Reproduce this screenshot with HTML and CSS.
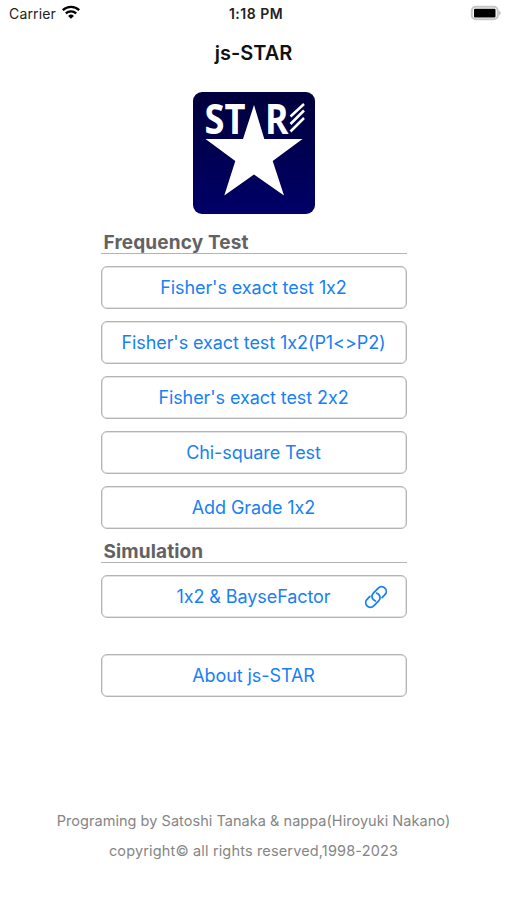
FILE: index.html
```html
<!DOCTYPE html>
<html lang="en">
<head>
<meta charset="utf-8">
<title>js-STAR</title>
<link rel="stylesheet" href="styles.css">
</head>
<body>
<header class="status">
  <div class="status-left"><span class="carrier">Carrier</span>
    <svg class="wifi" viewBox="0 0 18 14" width="18" height="14"><g fill="none" stroke="#000" stroke-width="2.3"><path d="M.8 5.1a11.8 11.8 0 0 1 16.4 0"/><path d="M3.8 8.4a7.5 7.5 0 0 1 10.4 0"/></g><path d="M9 13.8 6.1 10.9a4.2 4.2 0 0 1 5.8 0z"/></svg>
  </div>
  <div class="time">1:18 PM</div>
  <div class="status-right">
    <svg viewBox="0 0 32 16" width="32" height="16"><rect x="1.8" y="1.8" width="26" height="12.5" rx="4" fill="#fff" stroke="#c6c6c6" stroke-width="2"/><rect x="4" y="3.8" width="21.5" height="8.8" rx="1" fill="#000"/><path d="M29.3 5.5q2.6 2.6 0 5z" fill="#aaa"/></svg>
  </div>
</header>
<h1 class="title">js-STAR</h1>
<svg class="logo" viewBox="0 0 122 122" width="122" height="122">
  <defs><linearGradient id="navy" x1="0" y1="0" x2="0" y2="1"><stop offset="0" stop-color="#00003c"/><stop offset="1" stop-color="#000068"/></linearGradient></defs>
  <rect width="122" height="122" rx="9" fill="url(#navy)"/>
  <path fill="#fff" d="M61 13 71.3 47H109.5L79.7 69 91 103.5 61 82.5 31.3 103.5 42.3 69 12.5 47H50z"/>
  <g class="logo-text"><text x="11.5" y="42" textLength="41" lengthAdjust="spacingAndGlyphs">ST</text><text x="72" y="42" textLength="23.5" lengthAdjust="spacingAndGlyphs">R</text></g>
  <path d="M97.5 24.5 111 12M97.5 32 111 18.500M97.5 39.500 111 26" stroke="#fff" stroke-width="2.5" fill="none"/>
</svg>
<main class="menu">
  <h2 class="section">Frequency Test</h2>
  <button class="item">Fisher's exact test 1x2</button>
  <button class="item">Fisher's exact test 1x2(P1&lt;&gt;P2)</button>
  <button class="item">Fisher's exact test 2x2</button>
  <button class="item">Chi-square Test</button>
  <button class="item">Add Grade 1x2</button>
  <h2 class="section second">Simulation</h2>
  <button class="item linked">1x2 &amp; BayseFactor
    <svg class="link" viewBox="-12 -12 24 24" width="24" height="24" fill="none" stroke="#1780f5" stroke-width="1.8" stroke-linecap="round"><g transform="rotate(-45)"><path d="M-3.9-4.7H-7.9A4.7 4.7 0 0 0-7.9 4.7H-.9A4.7 4.7 0 0 0 3.2-2.3"/><path d="M3.9 4.7H7.9A4.7 4.7 0 0 0 7.9-4.7H.9A4.7 4.7 0 0 0-3.2 2.3"/></g></svg>
  </button>
  <button class="item about">About js-STAR</button>
</main>
<footer class="footer">
  <p>Programing by Satoshi Tanaka &amp; nappa(Hiroyuki Nakano)</p>
  <p class="copyright">copyright© all rights reserved,1998-2023</p>
</footer>
</body>
</html>
```
FILE: styles.css
```css
* { box-sizing: border-box; }
body {
  margin: 0;
  height: 900px;
  overflow: hidden;
  background: #fff;
  font-family: Inter, "Liberation Sans", sans-serif;
  font-feature-settings: "calt" 0;
  display: flex;
  flex-direction: column;
  align-items: center;
}
.status {
  width: 100%;
  height: 28px;
  display: grid;
  grid-template-columns: 1fr auto 1fr;
  align-items: center;
  padding: 0 5px 2px 9px;
  font-size: 14px;
  color: #222;
}
.status-left { display: flex; align-items: center; gap: 6px; letter-spacing: 0.15px; }
.wifi { margin-top: -2px; }
.time { font-weight: 600; letter-spacing: 0.5px; margin-right: -1px; }
.status-right { display: flex; justify-content: flex-end; }
.title {
  margin: 12px 0 0;
  height: 24px;
  line-height: 26px;
  font-size: 20px;
  font-weight: 600;
  color: #111;
}
.logo { margin-top: 27.5px; flex: none; }
.logo-text { font: 700 41px "Open Sans", sans-serif; fill: #fff; }
.menu { width: 306px; display: flex; flex-direction: column; }
.section {
  margin: 15.5px 0 12px;
  height: 24.5px;
  padding-left: 3px;
  border-bottom: 1px solid #b4b4b4;
  line-height: 27px;
  font-size: 19px;
  font-weight: 700;
  letter-spacing: 0.13px;
  color: #626262;
}
.section.second { margin-top: -2.5px; }
.item {
  position: relative;
  height: 43px;
  margin: 0 0 12px;
  padding: 1px 0 0;
  border: 1px solid #b4b4b4;
  border-radius: 6px;
  box-shadow: inset 0 0 0 0.5px #c8c8c8;
  background: #fff;
  font: 400 18px/40px Inter, "Liberation Sans", sans-serif;
  font-feature-settings: "calt" 0;
  letter-spacing: -0.08px;
  color: #1780f5;
}
.link { position: absolute; right: 18px; top: 9px; }
.about { margin-top: 24px; }
.footer {
  margin-top: 99px;
  text-align: center;
  color: #858585;
  font-size: 14.5px;
  letter-spacing: 0.04px;
}
.footer p { margin: 0 0 6.5px; height: 24px; line-height: 25px; white-space: nowrap; }
.footer .copyright { letter-spacing: 0.15px; }
```
